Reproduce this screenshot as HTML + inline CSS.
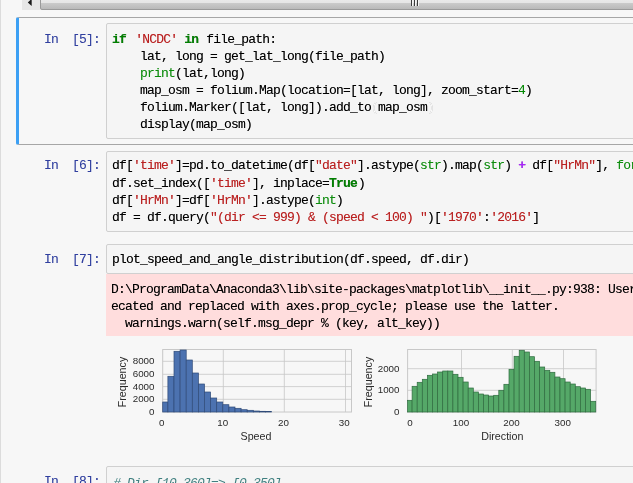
<!DOCTYPE html>
<html><head><meta charset="utf-8"><title>notebook</title>
<style>
html,body{margin:0;padding:0}
body{width:633px;height:483px;overflow:hidden;position:relative;background:#f7f7f7;font-family:"Liberation Mono",monospace;font-size:13px;line-height:17px;color:#000}
.abs{position:absolute}
.ln{position:absolute;height:17px;white-space:pre;width:900px}
.ln .t{display:inline-block;white-space:pre;letter-spacing:-0.8px;will-change:transform;text-shadow:0 0 0 rgba(0,0,0,.45)}
.ns .t{text-shadow:none}
.k{color:#008000;font-weight:bold}
.s{color:#BA2121;text-shadow:0 0 0 rgba(186,33,33,.45)}
.bi{color:#0c8c0c;text-shadow:0 0 0 rgba(12,140,12,.3)}
.o{color:#AA22FF;font-weight:bold}
.n{color:#008800;text-shadow:0 0 0 rgba(0,136,0,.3)}
.m{color:#fdfdfd}
.p{color:#303F9F;text-shadow:0 0 0 rgba(48,63,159,.25)}
.c{color:#408080;font-style:italic}
.inp{position:absolute;left:106px;width:600px;border:1px solid #d0d0d0;border-radius:2px;background:#f5f5f5;box-sizing:border-box}
.plot{position:absolute;left:0;top:0}
</style></head><body>

<div class="abs" style="left:0;top:0;width:1px;height:483px;background:#dcdcdc"></div>
<div class="abs" style="left:22px;top:0;width:611px;height:10px;background:#e7e7e7"></div>
<div class="abs" style="left:39.5px;top:-2px;width:620px;height:11.8px;box-sizing:border-box;border:1px solid #9a9a9a;border-radius:2px;background:linear-gradient(#eaeaea 0,#e6e6e6 35%,#cbcbcb 40%,#b9b9b9 100%)"></div>
<svg class="abs" style="left:26px;top:0" width="8" height="9" viewBox="0 0 8 9"><path d="M5.7 -1.2 L1.8 2.4 L5.7 5.9 Z" fill="#1a1a1a"/></svg>
<div class="abs" style="left:411.2px;top:-1px;width:9px;height:6.5px;background:repeating-linear-gradient(90deg,#3c3c3c 0,#3c3c3c 1.3px,#f4f4f4 1.3px,#f4f4f4 2.4px,transparent 2.4px,transparent 3px)"></div>
<div class="abs" style="left:16px;top:17px;width:640px;height:127.5px;box-sizing:border-box;border:1px solid #a6a6a6;border-left:3px solid #3ca0f4;border-radius:2px 0 0 2px;"></div>
<div class="inp" style="top:23px;height:115.5px"></div>
<div class="inp" style="top:151px;height:81px"></div>
<div class="inp" style="top:244px;height:29.5px"></div>
<div class="inp" style="top:466px;height:60px"></div>
<div class="abs" style="left:106px;top:274px;width:540px;height:62px;background:#ffdddd"></div>
<div class="ln ns" style="left:43.5px;top:30.5px"><span class="t"><span class="p">In  [5]:</span></span></div>
<div class="ln ns" style="left:43.5px;top:157px"><span class="t"><span class="p">In  [6]:</span></span></div>
<div class="ln ns" style="left:43.5px;top:251px"><span class="t"><span class="p">In  [7]:</span></span></div>
<div class="ln ns" style="left:43.5px;top:473px"><span class="t"><span class="p">In  [8]:</span></span></div>
<div class="ln " style="left:112px;top:30.5px"><span class="t"><b class="k" style="margin-right:2.3px">if</b> <span class="s">'NCDC'</span> <b class="k" style="margin-right:0.8px">in</b> file_path:</span></div>
<div class="ln " style="left:112px;top:47.5px"><span class="t">    lat, long = get_lat_long(file_path)</span></div>
<div class="ln " style="left:112px;top:64.5px"><span class="t">    <span class="bi">print</span>(lat,long)</span></div>
<div class="ln " style="left:112px;top:81.5px"><span class="t">    map_osm = folium.Map(location=[lat, long], zoom_start=<span class="n">4</span>)</span></div>
<div class="ln " style="left:112px;top:98.5px"><span class="t">    folium.Marker([lat, long]).add_to<span class="m">(</span>map_osm<span class="m">)</span></span></div>
<div class="ln " style="left:112px;top:115.5px"><span class="t">    display(map_osm)</span></div>
<div class="ln " style="left:112px;top:157.4px"><span class="t">df[<span class="s">'time'</span>]=pd.to_datetime(df[<span class="s">"date"</span>].astype(<span class="bi">str</span>).map(<span class="bi">str</span>) <b class="o">+</b> df[<span class="s">"HrMn"</span>], <span class="bi">format</span>=<span class="s">'%Y%m%d%H%M'</span>)</span></div>
<div class="ln " style="left:112px;top:174.53px"><span class="t">df.set_index([<span class="s">'time'</span>], inplace=<b class="k" style="margin-right:1px">True</b>)</span></div>
<div class="ln " style="left:112px;top:191.66px"><span class="t">df[<span class="s">'HrMn'</span>]=df[<span class="s">'HrMn'</span>].astype(<span class="bi">int</span>)</span></div>
<div class="ln " style="left:112px;top:208.79px"><span class="t">df = df.query(<span class="s">"(dir &lt;= 999) &amp; (speed &lt; 100) "</span>)[<span class="s">'1970'</span>:<span class="s">'2016'</span>]</span></div>
<div class="ln " style="left:111.5px;top:251px"><span class="t">plot_speed_and_angle_distribution(df.speed, df.dir)</span></div>
<div class="ln " style="left:111px;top:281px"><span class="t">D:\ProgramData\Anaconda3\lib\site-packages\matplotlib\__init__.py:938: UserWarning: axes.color_cycle is depr</span></div>
<div class="ln " style="left:111px;top:298px"><span class="t">ecated and replaced with axes.prop_cycle; please use the latter.</span></div>
<div class="ln " style="left:111px;top:315px"><span class="t">  warnings.warn(self.msg_depr % (key, alt_key))</span></div>
<div class="ln ns" style="left:113px;top:474.5px"><span class="t"><span class="c"># Dir [10,360]=&gt; [0,350]</span></span></div>
<svg class="plot" width="633" height="483" viewBox="0 0 633 483">
<rect x="162.7" y="349.5" width="188.8" height="62.5" fill="#f7f7f7" stroke="#c8c8c8" stroke-width="1"/>
<line x1="223.3" y1="349.5" x2="223.3" y2="412" stroke="#c6c6c6" stroke-width="0.8"/>
<line x1="284.3" y1="349.5" x2="284.3" y2="412" stroke="#c6c6c6" stroke-width="0.8"/>
<line x1="345.5" y1="349.5" x2="345.5" y2="412" stroke="#c6c6c6" stroke-width="0.8"/>
<line x1="162.7" y1="361.3" x2="351.5" y2="361.3" stroke="#c6c6c6" stroke-width="0.8"/>
<line x1="162.7" y1="374.3" x2="351.5" y2="374.3" stroke="#c6c6c6" stroke-width="0.8"/>
<line x1="162.7" y1="386.6" x2="351.5" y2="386.6" stroke="#c6c6c6" stroke-width="0.8"/>
<line x1="162.7" y1="399.3" x2="351.5" y2="399.3" stroke="#c6c6c6" stroke-width="0.8"/>
<rect x="162.70" y="402" width="5.200" height="10.00" fill="#4c72b0" stroke="#2f4a78" stroke-width="0.7"/>
<rect x="167.90" y="376.3" width="6.100" height="35.70" fill="#4c72b0" stroke="#2f4a78" stroke-width="0.7"/>
<rect x="174.00" y="351.3" width="6.100" height="60.70" fill="#4c72b0" stroke="#2f4a78" stroke-width="0.7"/>
<rect x="180.10" y="350" width="6.100" height="62.00" fill="#4c72b0" stroke="#2f4a78" stroke-width="0.7"/>
<rect x="186.20" y="360" width="6.100" height="52.00" fill="#4c72b0" stroke="#2f4a78" stroke-width="0.7"/>
<rect x="192.30" y="373" width="6.100" height="39.00" fill="#4c72b0" stroke="#2f4a78" stroke-width="0.7"/>
<rect x="198.40" y="384" width="6.100" height="28.00" fill="#4c72b0" stroke="#2f4a78" stroke-width="0.7"/>
<rect x="204.50" y="392" width="6.100" height="20.00" fill="#4c72b0" stroke="#2f4a78" stroke-width="0.7"/>
<rect x="210.60" y="398" width="6.100" height="14.00" fill="#4c72b0" stroke="#2f4a78" stroke-width="0.7"/>
<rect x="216.70" y="402" width="6.100" height="10.00" fill="#4c72b0" stroke="#2f4a78" stroke-width="0.7"/>
<rect x="222.80" y="404.7" width="6.100" height="7.30" fill="#4c72b0" stroke="#2f4a78" stroke-width="0.7"/>
<rect x="228.90" y="407" width="6.100" height="5.00" fill="#4c72b0" stroke="#2f4a78" stroke-width="0.7"/>
<rect x="235.00" y="408.3" width="6.100" height="3.70" fill="#4c72b0" stroke="#2f4a78" stroke-width="0.7"/>
<rect x="241.10" y="409.7" width="6.100" height="2.30" fill="#4c72b0" stroke="#2f4a78" stroke-width="0.7"/>
<rect x="247.20" y="410.3" width="6.100" height="1.70" fill="#4c72b0" stroke="#2f4a78" stroke-width="0.7"/>
<rect x="253.30" y="411" width="6.100" height="1.00" fill="#4c72b0" stroke="#2f4a78" stroke-width="0.7"/>
<rect x="259.40" y="411.3" width="6.100" height="0.70" fill="#4c72b0" stroke="#2f4a78" stroke-width="0.7"/>
<rect x="265.50" y="411.5" width="6.100" height="0.50" fill="#4c72b0" stroke="#2f4a78" stroke-width="0.7"/>
<rect x="407.6" y="349.5" width="188.5" height="62.5" fill="#f7f7f7" stroke="#c8c8c8" stroke-width="1"/>
<line x1="461.5" y1="349.5" x2="461.5" y2="412" stroke="#c6c6c6" stroke-width="0.8"/>
<line x1="512.3" y1="349.5" x2="512.3" y2="412" stroke="#c6c6c6" stroke-width="0.8"/>
<line x1="563.5" y1="349.5" x2="563.5" y2="412" stroke="#c6c6c6" stroke-width="0.8"/>
<line x1="407.6" y1="368.7" x2="596.1" y2="368.7" stroke="#c6c6c6" stroke-width="0.8"/>
<line x1="407.6" y1="390.3" x2="596.1" y2="390.3" stroke="#c6c6c6" stroke-width="0.8"/>
<rect x="407.60" y="400.3" width="4.500" height="11.70" fill="#55a868" stroke="#2f6b3f" stroke-width="0.7"/>
<rect x="412.10" y="386.3" width="5.100" height="25.70" fill="#55a868" stroke="#2f6b3f" stroke-width="0.7"/>
<rect x="417.20" y="382.3" width="5.100" height="29.70" fill="#55a868" stroke="#2f6b3f" stroke-width="0.7"/>
<rect x="422.30" y="379.3" width="5.100" height="32.70" fill="#55a868" stroke="#2f6b3f" stroke-width="0.7"/>
<rect x="427.40" y="375.3" width="5.100" height="36.70" fill="#55a868" stroke="#2f6b3f" stroke-width="0.7"/>
<rect x="432.50" y="374" width="5.100" height="38.00" fill="#55a868" stroke="#2f6b3f" stroke-width="0.7"/>
<rect x="437.60" y="372" width="5.100" height="40.00" fill="#55a868" stroke="#2f6b3f" stroke-width="0.7"/>
<rect x="442.70" y="371" width="5.100" height="41.00" fill="#55a868" stroke="#2f6b3f" stroke-width="0.7"/>
<rect x="447.80" y="371" width="5.100" height="41.00" fill="#55a868" stroke="#2f6b3f" stroke-width="0.7"/>
<rect x="452.90" y="374.3" width="5.100" height="37.70" fill="#55a868" stroke="#2f6b3f" stroke-width="0.7"/>
<rect x="458.00" y="377.3" width="5.100" height="34.70" fill="#55a868" stroke="#2f6b3f" stroke-width="0.7"/>
<rect x="463.10" y="382" width="5.100" height="30.00" fill="#55a868" stroke="#2f6b3f" stroke-width="0.7"/>
<rect x="468.20" y="388" width="5.100" height="24.00" fill="#55a868" stroke="#2f6b3f" stroke-width="0.7"/>
<rect x="473.30" y="392" width="5.100" height="20.00" fill="#55a868" stroke="#2f6b3f" stroke-width="0.7"/>
<rect x="478.40" y="394" width="5.100" height="18.00" fill="#55a868" stroke="#2f6b3f" stroke-width="0.7"/>
<rect x="483.50" y="395" width="5.100" height="17.00" fill="#55a868" stroke="#2f6b3f" stroke-width="0.7"/>
<rect x="488.60" y="396" width="5.100" height="16.00" fill="#55a868" stroke="#2f6b3f" stroke-width="0.7"/>
<rect x="493.70" y="395.3" width="5.100" height="16.70" fill="#55a868" stroke="#2f6b3f" stroke-width="0.7"/>
<rect x="498.80" y="390.3" width="5.100" height="21.70" fill="#55a868" stroke="#2f6b3f" stroke-width="0.7"/>
<rect x="503.90" y="384.3" width="5.100" height="27.70" fill="#55a868" stroke="#2f6b3f" stroke-width="0.7"/>
<rect x="509.00" y="369.3" width="5.100" height="42.70" fill="#55a868" stroke="#2f6b3f" stroke-width="0.7"/>
<rect x="514.10" y="356.3" width="5.100" height="55.70" fill="#55a868" stroke="#2f6b3f" stroke-width="0.7"/>
<rect x="519.20" y="350.3" width="5.100" height="61.70" fill="#55a868" stroke="#2f6b3f" stroke-width="0.7"/>
<rect x="524.30" y="352" width="5.100" height="60.00" fill="#55a868" stroke="#2f6b3f" stroke-width="0.7"/>
<rect x="529.40" y="356.7" width="5.100" height="55.30" fill="#55a868" stroke="#2f6b3f" stroke-width="0.7"/>
<rect x="534.50" y="361.3" width="5.100" height="50.70" fill="#55a868" stroke="#2f6b3f" stroke-width="0.7"/>
<rect x="539.60" y="367" width="5.100" height="45.00" fill="#55a868" stroke="#2f6b3f" stroke-width="0.7"/>
<rect x="544.70" y="370.3" width="5.100" height="41.70" fill="#55a868" stroke="#2f6b3f" stroke-width="0.7"/>
<rect x="549.80" y="372.3" width="5.100" height="39.70" fill="#55a868" stroke="#2f6b3f" stroke-width="0.7"/>
<rect x="554.90" y="377" width="5.100" height="35.00" fill="#55a868" stroke="#2f6b3f" stroke-width="0.7"/>
<rect x="560.00" y="378.7" width="5.100" height="33.30" fill="#55a868" stroke="#2f6b3f" stroke-width="0.7"/>
<rect x="565.10" y="382" width="5.100" height="30.00" fill="#55a868" stroke="#2f6b3f" stroke-width="0.7"/>
<rect x="570.20" y="384" width="5.100" height="28.00" fill="#55a868" stroke="#2f6b3f" stroke-width="0.7"/>
<rect x="575.30" y="386.7" width="5.100" height="25.30" fill="#55a868" stroke="#2f6b3f" stroke-width="0.7"/>
<rect x="580.40" y="388" width="5.100" height="24.00" fill="#55a868" stroke="#2f6b3f" stroke-width="0.7"/>
<rect x="585.50" y="389.3" width="5.100" height="22.70" fill="#55a868" stroke="#2f6b3f" stroke-width="0.7"/>
<rect x="590.60" y="401.3" width="5.100" height="10.70" fill="#55a868" stroke="#2f6b3f" stroke-width="0.7"/>
<g font-family="Liberation Sans, Arial, sans-serif" fill="#2a2a2a" font-size="9.8">
<text x="154.5" y="364.2" text-anchor="end">8000</text>
<text x="154.5" y="377.2" text-anchor="end">6000</text>
<text x="154.5" y="389.5" text-anchor="end">4000</text>
<text x="154.5" y="402.2" text-anchor="end">2000</text>
<text x="154.5" y="415.2" text-anchor="end">0</text>
<text x="161.7" y="425.9" text-anchor="middle">0</text>
<text x="222.7" y="425.9" text-anchor="middle">10</text>
<text x="283.5" y="425.9" text-anchor="middle">20</text>
<text x="344.3" y="425.9" text-anchor="middle">30</text>
<text x="399.5" y="371.59999999999997" text-anchor="end">2000</text>
<text x="399.5" y="393.2" text-anchor="end">1000</text>
<text x="399.5" y="415.2" text-anchor="end">0</text>
<text x="410" y="425.9" text-anchor="middle">0</text>
<text x="461" y="425.9" text-anchor="middle">100</text>
<text x="511.5" y="425.9" text-anchor="middle">200</text>
<text x="562.7" y="425.9" text-anchor="middle">300</text>
</g>
<g font-family="Liberation Sans, Arial, sans-serif" fill="#2a2a2a" font-size="10.7">
<text x="256" y="440" text-anchor="middle">Speed</text>
<text x="502.3" y="440" text-anchor="middle">Direction</text>
<text transform="translate(125.5,382) rotate(-90)" text-anchor="middle">Frequency</text>
<text transform="translate(372,382) rotate(-90)" text-anchor="middle">Frequency</text>
</g>
</svg>
</body></html>
